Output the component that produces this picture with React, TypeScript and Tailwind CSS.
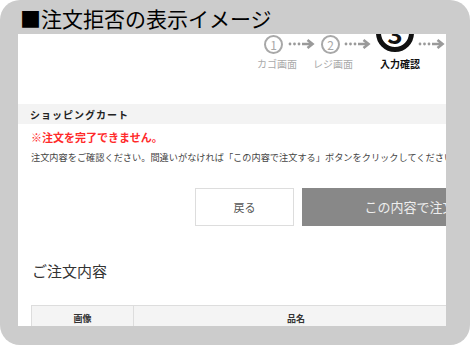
import React from "react";

const font = { fontFamily: '"Noto Sans CJK JP", "Noto Sans", sans-serif' };

function Dots() {
  return (
    <svg width="30" height="10" viewBox="0 0 30 10" className="shrink-0">
      <circle cx="3" cy="5" r="1.4" fill="#9a9a9a" />
      <circle cx="7.5" cy="5" r="1.4" fill="#9a9a9a" />
      <circle cx="12" cy="5" r="1.4" fill="#9a9a9a" />
      <path d="M15 5 H25" stroke="#9a9a9a" strokeWidth="2.6" />
      <path d="M20.5 1 L25.5 5 L20.5 9" stroke="#9a9a9a" strokeWidth="2.6" fill="none" />
    </svg>
  );
}

export default function App() {
  return (
    <div className="w-[470px] h-[345px] bg-white" style={font}>
      <div className="w-full h-full bg-[#cccccc] rounded-[20px] flex flex-col overflow-hidden">
        <div className="h-[34px] pl-[20px] pt-[3px] text-[21px] leading-[30px] text-black">■注文拒否の表示イメージ</div>

        <div className="ml-[18px] w-[428px] h-[292px] bg-white overflow-hidden">
          <div className="w-[640px]">
            {/* steps */}
            <div className="flex items-start ml-[246px]">
              <div className="mt-[1px] w-[19px] h-[19px] rounded-full border-2 border-[#a8a8a8] text-[#a8a8a8] text-[12px] leading-none flex items-center justify-center">1</div>
              <div className="mt-[5px] mx-[4px]"><Dots /></div>
              <div className="mt-[1px] w-[19px] h-[19px] rounded-full border-2 border-[#a8a8a8] text-[#a8a8a8] text-[12px] leading-none flex items-center justify-center">2</div>
              <div className="mt-[5px] mx-[3px]"><Dots /></div>
              <div className="mt-[-20px] w-[38px] h-[38px] rounded-full border-[5px] border-[#111] text-[#111] text-[26px] font-bold leading-none flex items-center justify-center">3</div>
              <div className="mt-[5px] mx-[3px]"><Dots /></div>
            </div>
            <div className="flex mt-[4px] text-[10px] leading-[12px]">
              <span className="ml-[239px] text-[#aaaaaa]">カゴ画面</span>
              <span className="ml-[16px] text-[#aaaaaa]">レジ画面</span>
              <span className="ml-[27px] text-[#111] font-bold">入力確認</span>
            </div>

            {/* cart bar */}
            <div className="mt-[34px] h-[20px] bg-[#f3f3f3] flex items-center pl-[12px] text-[10px] font-bold tracking-[1px] text-[#222]">ショッピングカート</div>

            <p className="mt-[6px] pl-[13px] text-[11px] leading-[14px] font-bold text-[#ff2a2a]">※注文を完了できません。</p>
            <p className="mt-[6px] pl-[13px] text-[9.2px] leading-[14px] text-[#444] whitespace-nowrap">注文内容をご確認ください。間違いがなければ「この内容で注文する」ボタンをクリックしてください。</p>

            {/* buttons */}
            <div className="flex mt-[24px] h-[38px]">
              <div className="ml-[177px] w-[99px] border border-[#dddddd] flex items-center justify-center text-[11px] text-[#555]">戻る</div>
              <div className="ml-[8px] w-[242px] bg-[#888888] flex items-center justify-center text-[13px] text-[#eeeeee]">この内容で注文する</div>
            </div>

            <h2 className="mt-[35px] pl-[14px] text-[15px] leading-[20px] text-[#333]">ご注文内容</h2>

            {/* table */}
            <div className="mt-[24px] ml-[13px] flex h-[28px] border border-[#dddddd] bg-[#f4f4f4] text-[9px] font-bold text-[#333]">
              <div className="w-[102px] border-r border-[#dddddd] flex items-center justify-center">画像</div>
              <div className="w-[324px] flex items-center justify-center">品名</div>
            </div>
          </div>
        </div>
      </div>
    </div>
  );
}
